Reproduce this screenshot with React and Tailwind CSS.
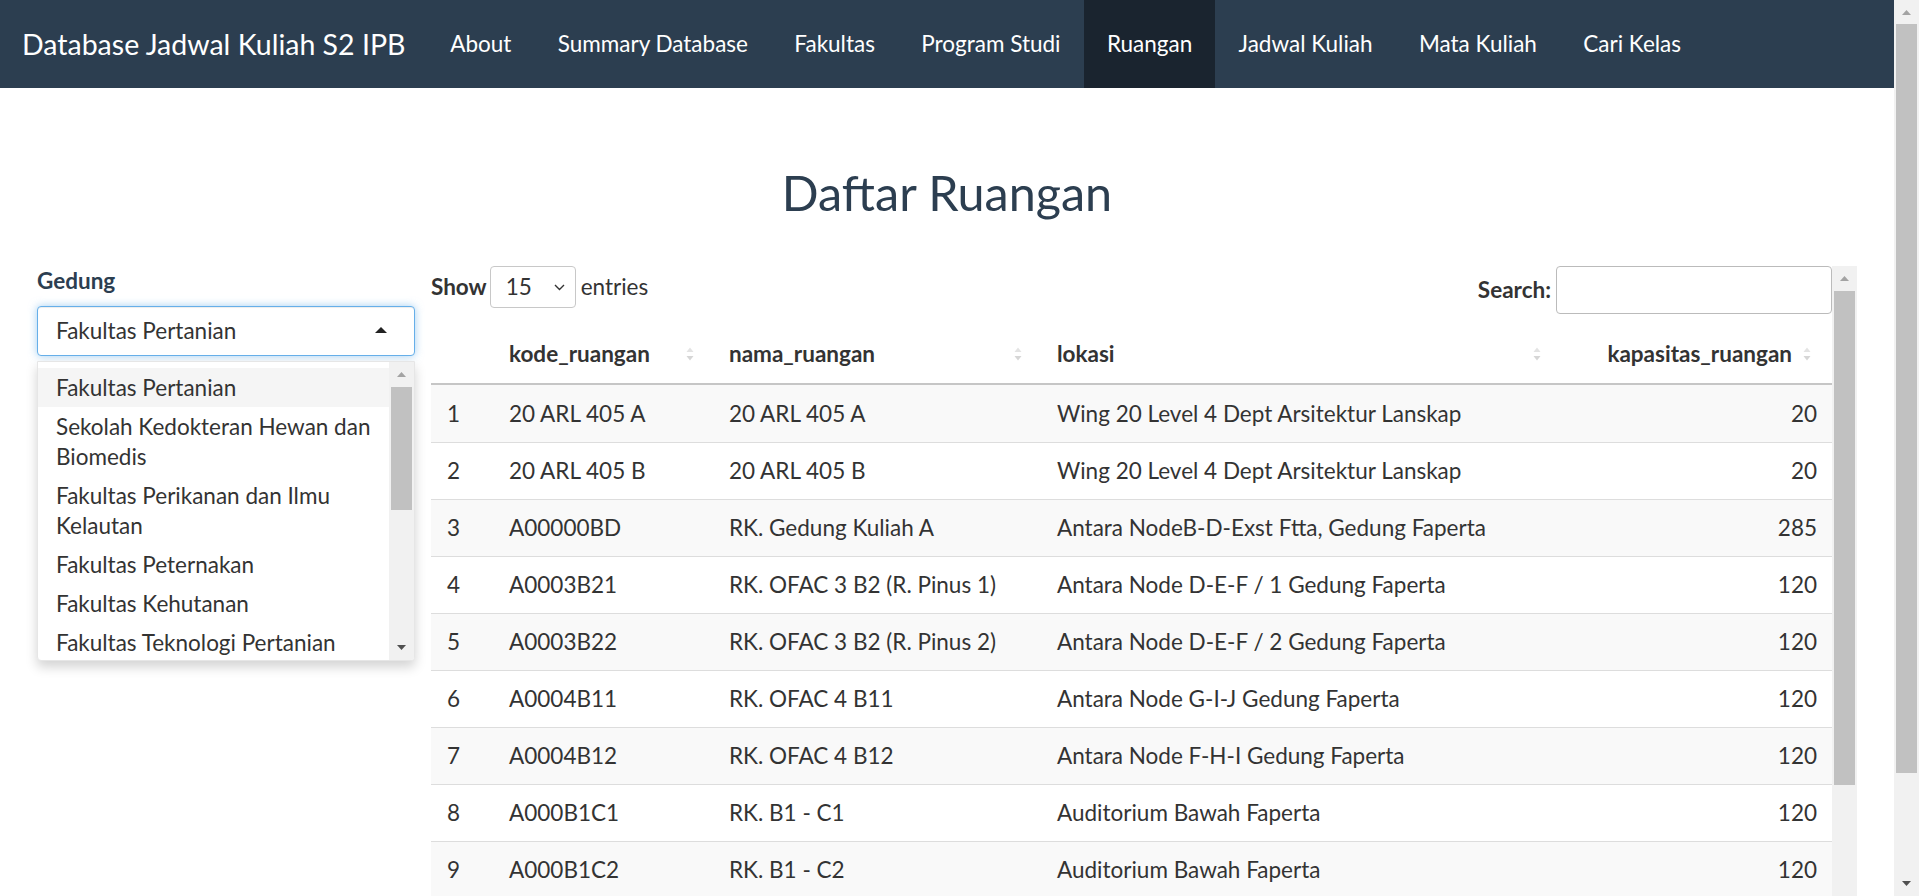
import React from 'react';

const navLinks = ['About', 'Summary Database', 'Fakultas', 'Program Studi', 'Ruangan', 'Jadwal Kuliah', 'Mata Kuliah', 'Cari Kelas'];

const gedungOptions = [
  'Fakultas Pertanian',
  'Sekolah Kedokteran Hewan dan Biomedis',
  'Fakultas Perikanan dan Ilmu Kelautan',
  'Fakultas Peternakan',
  'Fakultas Kehutanan',
  'Fakultas Teknologi Pertanian',
];

const rooms = [
  ['20 ARL 405 A', '20 ARL 405 A', 'Wing 20 Level 4 Dept Arsitektur Lanskap', 20],
  ['20 ARL 405 B', '20 ARL 405 B', 'Wing 20 Level 4 Dept Arsitektur Lanskap', 20],
  ['A00000BD', 'RK. Gedung Kuliah A', 'Antara NodeB-D-Exst Ftta, Gedung Faperta', 285],
  ['A0003B21', 'RK. OFAC 3 B2 (R. Pinus 1)', 'Antara Node D-E-F / 1 Gedung Faperta', 120],
  ['A0003B22', 'RK. OFAC 3 B2 (R. Pinus 2)', 'Antara Node D-E-F / 2 Gedung Faperta', 120],
  ['A0004B11', 'RK. OFAC 4 B11', 'Antara Node G-I-J Gedung Faperta', 120],
  ['A0004B12', 'RK. OFAC 4 B12', 'Antara Node F-H-I Gedung Faperta', 120],
  ['A000B1C1', 'RK. B1 - C1', 'Auditorium Bawah Faperta', 120],
  ['A000B1C2', 'RK. B1 - C2', 'Auditorium Bawah Faperta', 120],
];

// small triangle used by the scrollbar arrows and the select caret
const Tri = ({ up = true, color, w = 9, h = 5 }) => (
  <svg width={w} height={h} viewBox={`0 0 ${w} ${h}`}>
    <path d={up ? `M0 ${h} L${w / 2} 0 L${w} ${h} Z` : `M0 0 L${w / 2} ${h} L${w} 0 Z`} fill={color} />
  </svg>
);

const SortIcon = () => (
  <svg width="8" height="16" viewBox="0 0 8 16" className="shrink-0">
    <path d="M0.5 6 L4 1.5 L7.5 6 Z" fill="#e3e3e3" />
    <path d="M0.5 10 L4 14.5 L7.5 10 Z" fill="#d6d6d6" />
  </svg>
);

// fake chrome-style scrollbar, drawn as a column
const Scrollbar = ({ thumbHeight, downArrow = true, className = '' }) => (
  <div className={`w-[25px] bg-[#f1f1f1] flex flex-col shrink-0 ${className}`}>
    <div className="h-[25px] flex items-center justify-center shrink-0">
      <Tri up color="#a3a3a3" />
    </div>
    <div className="mx-[2px] bg-[#c1c1c1] shrink-0" style={{ height: thumbHeight }} />
    <div className="flex-1" />
    {downArrow && (
      <div className="h-[25px] flex items-center justify-center shrink-0">
        <Tri up={false} color="#505050" />
      </div>
    )}
  </div>
);

const Navbar = () => (
  <nav className="h-[88px] bg-[#2c3e50] flex items-stretch shrink-0">
    <div className="w-[427px] pl-[22px] flex items-center text-white text-[28.5px] whitespace-nowrap">Database Jadwal Kuliah S2 IPB</div>
    {navLinks.map((l) => (
      <div
        key={l}
        className={`px-[23.2px] flex items-center text-white text-[22.5px] whitespace-nowrap ${l === 'Ruangan' ? 'bg-[#1a242f]' : ''}`}
      >
        {l}
      </div>
    ))}
  </nav>
);

const GedungFilter = () => (
  <div className="w-[378px] shrink-0 text-[#333]">
    <div className="text-[22.5px] leading-[30px] font-bold text-[#2c3e50] mb-[10px]">Gedung</div>
    <div className="h-[50px] rounded-[4px] border border-[#66afe9] shadow-[inset_0_1px_1px_rgba(0,0,0,0.075),0_0_8px_rgba(102,175,233,0.6)] flex items-center justify-between pl-[18px] pr-[27px] text-[22.5px] bg-white">
      <span>Fakultas Pertanian</span>
      <span className="-mt-[3px]">
        <Tri up color="#222" w={12} h={6} />
      </span>
    </div>
    <div className="mt-[5px] h-[300px] border border-[#e6e6e6] rounded-b-[4px] bg-white shadow-[0_6px_12px_rgba(0,0,0,0.175)] flex overflow-hidden">
      <div className="flex-1 pt-[6px] overflow-hidden">
        {gedungOptions.map((g, i) => (
          <div
            key={g}
            className={`pl-[18px] pr-[6px] py-[4.5px] text-[22.5px] leading-[30px] ${i === 0 ? 'bg-[#f5f5f5]' : ''}`}
          >
            {g}
          </div>
        ))}
      </div>
      <Scrollbar thumbHeight={123} className="w-[24px]" />
    </div>
  </div>
);

const RoomTable = () => (
  <div className="flex-1 flex h-[630px]">
    <div className="flex-1 overflow-hidden text-[#333] text-[22.5px]">
      {/* length + search controls */}
      <div className="h-[48px] flex justify-between items-start">
        <div className="flex items-center h-[42px]">
          <span className="font-bold">Show</span>
          <div className="ml-[3px] w-[86px] h-[42px] border border-[#c8c8c8] rounded-[4px] flex items-center justify-between pl-[15px] pr-[10px]">
            <span>15</span>
            <svg width="11" height="7" viewBox="0 0 11 7">
              <path d="M1 1 L5.5 5.5 L10 1" fill="none" stroke="#333" strokeWidth="1.4" />
            </svg>
          </div>
          <span className="ml-[5px]">entries</span>
        </div>
        <div className="flex items-center h-[48px]">
          <span className="font-bold">Search:</span>
          <div className="ml-[5px] w-[276px] h-[48px] border border-[#bbbbbb] rounded-[4px] bg-white" />
        </div>
      </div>

      <table className="mt-[11px] w-full table-fixed border-separate border-spacing-0">
        <colgroup>
          <col className="w-[64px]" />
          <col className="w-[220px]" />
          <col className="w-[328px]" />
          <col className="w-[519px]" />
          <col className="w-[270px]" />
        </colgroup>
        <thead>
          <tr>
            <th className="py-[14px] leading-[30px] border-b-2 border-[#c6c6c6]" />
            {['kode_ruangan', 'nama_ruangan', 'lokasi'].map((h) => (
              <th key={h} className="py-[14px] leading-[30px] border-b-2 border-[#c6c6c6] font-bold text-left">
                <div className="flex items-center pl-[14px] pr-[21px]">
                  <span>{h}</span>
                  <span className="ml-auto">
                    <SortIcon />
                  </span>
                </div>
              </th>
            ))}
            <th className="py-[14px] leading-[30px] border-b-2 border-[#c6c6c6] font-bold">
              <div className="flex items-center justify-end gap-[11px] pr-[21px]">
                <span>kapasitas_ruangan</span>
                <SortIcon />
              </div>
            </th>
          </tr>
        </thead>
        <tbody>
          {rooms.map((r, i) => {
            const cell = `leading-[30px] ${i === 0 ? 'pt-[14px] pb-[13px]' : 'py-[13px] border-t border-[#dddddd]'}`;
            return (
              <tr key={r[0]} className={i % 2 === 0 ? 'bg-[#f9f9f9]' : 'bg-white'}>
                <td className={`${cell} pl-[16px]`}>{i + 1}</td>
                <td className={`${cell} pl-[14px]`}>{r[0]}</td>
                <td className={`${cell} pl-[14px]`}>{r[1]}</td>
                <td className={`${cell} pl-[14px]`}>{r[2]}</td>
                <td className={`${cell} pr-[15px] text-right`}>{r[3]}</td>
              </tr>
            );
          })}
        </tbody>
      </table>
    </div>
    <Scrollbar thumbHeight={494} downArrow={false} />
  </div>
);

export default function App() {
  return (
    <div className="h-screen w-full flex overflow-hidden bg-white font-[family-name:Lato,sans-serif]">
      <div className="flex-1 flex flex-col min-w-0">
        <Navbar />
        <h1 className="pt-[74px] text-center text-[48.5px] leading-[60px] font-normal text-[#2c3e50]">Daftar Ruangan</h1>
        <div className="mt-[44px] flex items-start gap-[16px] px-[37px]">
          <GedungFilter />
          <RoomTable />
        </div>
      </div>
      <Scrollbar thumbHeight={749} className="h-screen [&>div:first-child]:h-[24px]" />
    </div>
  );
}
